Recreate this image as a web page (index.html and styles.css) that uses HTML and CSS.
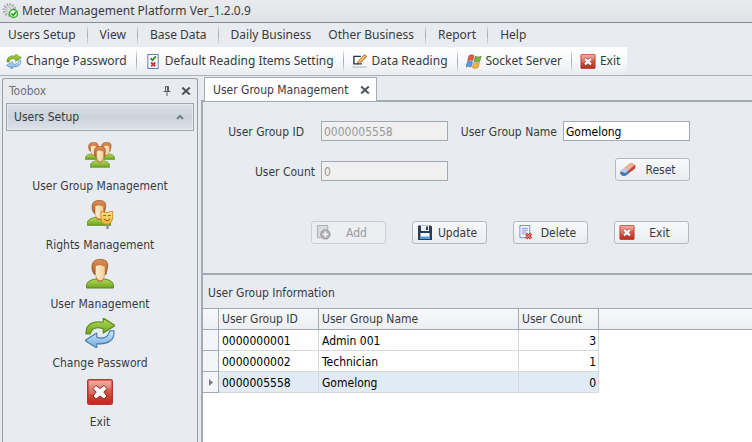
FILE: index.html
```html
<!DOCTYPE html>
<html lang="en">
<head>
<meta charset="utf-8">
<title>Meter Management Platform</title>
<link rel="stylesheet" href="styles.css">
</head>
<body>
<svg class="defs" aria-hidden="true">
  <defs>
    <linearGradient id="red" x1="0" y1="0" x2="0" y2="1"><stop offset="0" stop-color="#f0a294"/><stop offset=".45" stop-color="#d65a49"/><stop offset="1" stop-color="#b8281c"/></linearGradient>
    <linearGradient id="green" x1="0" y1="0" x2="0" y2="1"><stop offset="0" stop-color="#b8dc52"/><stop offset="1" stop-color="#6aa322"/></linearGradient>
    <linearGradient id="blue" x1="0" y1="0" x2="0" y2="1"><stop offset="0" stop-color="#cfe8fa"/><stop offset="1" stop-color="#6fa9dc"/></linearGradient>
    <linearGradient id="hair" x1="0" y1="0" x2="0" y2="1"><stop offset="0" stop-color="#dd9259"/><stop offset="1" stop-color="#a85a26"/></linearGradient>
    <linearGradient id="face" x1="0" y1="0" x2="1" y2="0"><stop offset="0" stop-color="#fff0d2"/><stop offset="1" stop-color="#f3cd98"/></linearGradient>
    <linearGradient id="mask" x1="0" y1="0" x2="0" y2="1"><stop offset="0" stop-color="#ffe88e"/><stop offset="1" stop-color="#efb52e"/></linearGradient>
    <symbol id="i-exit" viewBox="0 0 26 26">
      <rect x=".7" y=".7" width="24.6" height="24.6" rx="1.5" fill="url(#red)" stroke="#b4392c" stroke-width="1.4"/>
      <path d="M2 2h22v6Q12 16 2 15z" fill="#fff" opacity=".18"/>
      <path d="M9 6.500l4 3 4-3 3 3-3 3.700 3 3.800-3 3-4-3-4 3-3-3 3-3.800-3-3.700z" fill="#f6f6f8" stroke="#8f2a22" stroke-width="1" stroke-linejoin="round"/>
    </symbol>
    <symbol id="i-cycle" viewBox="0 0 28 28">
      <path d="M1 15C0 6 8 2 17 4V0l11 7-11 7v-4C11 8 6 9 5 15z" fill="url(#green)" stroke="#56851c" stroke-linejoin="round"/>
      <path d="M27 12c1 9-6 13-16 12v4L0 21l11-7v4c6 2 11 0 12-6z" fill="url(#blue)" stroke="#427bb2" stroke-linejoin="round"/>
    </symbol>
    <symbol id="i-person" viewBox="0 0 28 30">
      <path d="M.5 29C0 23 3 21.500 9 20h10c6 1.500 9 3 8.500 9z" fill="url(#green)" stroke="#5d8a22"/>
      <path d="M10 18h8q0 5-4 5t-4-5z" fill="#b9703a"/>
      <path d="M7.500 14C5.500 11 5.500 6 7 3.500 9 .5 12 .5 15 .5c6 0 8 4 6 10L20 15.500H8.500z" fill="url(#hair)" stroke="#9a5423" stroke-width=".8"/>
      <path d="M9.500 7q3-1.500 5-1 2 .8 4.500 1v8q-1 6.500-4.700 6.500T9.500 15z" fill="url(#face)" stroke="#c98850" stroke-width=".6"/>
    </symbol>
    <symbol id="i-group" viewBox="0 0 30 28">
      <svg x="0" y="0" width="17" height="18" viewBox="0 0 28 30" preserveAspectRatio="none"><use href="#i-person" width="28" height="30"/></svg>
      <svg x="13" y="0" width="17" height="18" viewBox="0 0 28 30" preserveAspectRatio="none"><use href="#i-person" width="28" height="30"/></svg>
      <svg x="5" y="4" width="20" height="22" viewBox="0 0 28 30" preserveAspectRatio="none"><use href="#i-person" width="28" height="30"/></svg>
    </symbol>
    <symbol id="i-rights" viewBox="0 0 28 32">
      <svg x="0" y="0" width="26" height="28"><use href="#i-person"/></svg>
      <path d="M22 22v9" stroke="#7f95aa" stroke-width="2.500"/>
      <path d="M15 12q6 3 12.500 0v6c0 5-3 8-6.500 8s-6-3-6-8z" fill="url(#mask)" stroke="#c98a1c"/>
      <path d="M17.500 17q1.500-1.500 3 0M22.500 17q1.500-1.500 3 0M18 20q3.500 4 7 0" fill="none" stroke="#9b5b12" stroke-width="1.200"/>
    </symbol>
    <symbol id="i-logo" viewBox="0 0 16 16">
      <circle cx="7.500" cy="7" r="5.300" fill="none" stroke="#a5a7a9" stroke-width="3" stroke-dasharray="1.500 1.200"/>
      <circle cx="7" cy="7" r="2.500" fill="#e2e2df" stroke="#aaa" stroke-width=".6"/>
      <circle cx="11.500" cy="10.500" r="4" fill="#eefae9" stroke="#35ad2f" stroke-width="1.500"/>
      <path d="M9.500 10.500l1.700 1.800 2.800-3.600" fill="none" stroke="#1f9d22" stroke-width="1.600"/>
    </symbol>
    <symbol id="i-list" viewBox="0 0 12 16">
      <rect x=".5" y=".5" width="11" height="15" fill="#f7f9ff" stroke="#5b74b8"/>
      <path d="M3.500 4.500l2 2 3.500-4" fill="none" stroke="#3f8a2a" stroke-width="2"/>
      <path d="M4 9l4.500 4M8.500 9L4 13" stroke="#c43a34" stroke-width="2"/>
    </symbol>
    <symbol id="i-write" viewBox="0 0 16 16">
      <path d="M0 13h15v2H0z" fill="#ccd0d3"/>
      <path d="M9 2.500H1.500v8H10" fill="#fff" stroke="#27344f" stroke-width="1.500"/>
      <path d="M5 11l1-3.500L12.500 1q2-.5 2.500 2L8.500 9.500z" fill="#e3a94f" stroke="#99631f" stroke-width=".8"/>
      <path d="M7 8l6-6" stroke="#ffe3a0"/><path d="M5 11l.5-2 1.500 1.400z" fill="#333"/>
    </symbol>
    <symbol id="i-flag" viewBox="0 0 16 14">
      <path d="M3 1q3-1.500 5 .2L6.700 6.200q-2.500-1.500-5 0z" fill="#dd5c43" stroke="#b53c29" stroke-width=".6"/>
      <path d="M9.200 1.800q3 1.500 6 0L13.700 7q-3 1.500-5.700 0z" fill="#7db343" stroke="#4f8428" stroke-width=".6"/>
      <path d="M1.500 7.200q2.500-1.200 5 .2L5 12.600q-2.500-1.500-5 0z" fill="#5b9ade" stroke="#2e6cb4" stroke-width=".6"/>
      <path d="M7.700 8.200q3 1.500 5.700 0L12 13.200q-3 1.300-5.700 0z" fill="#f0b545" stroke="#c07c1c" stroke-width=".6"/>
    </symbol>
    <symbol id="i-eraser" viewBox="0 0 16 14">
      <path d="M.5 9L10 .8q1-.6 2 0l2.800 1.700q.8.500.7 1.500l-.5 2L5.500 13.300H2.500L.5 11.500z" fill="#c9402f"/>
      <path d="M.5 9L10 .8q1-.6 2 0l2.800 1.700-9.500 8.300z" fill="#f3b19b"/>
      <path d="M.5 9l3.700-3.200 4.600 2L5.300 10.800z" fill="#a9d2f5"/>
      <path d="M.5 9l4.800 1.800L8.800 8v2.700l-3.300 2.600H2.500L.5 11.500z" fill="#3d7dc4"/>
      <path d="M5.300 10.800l9.500-8.300" stroke="#e06c58" stroke-width=".6"/>
    </symbol>
    <symbol id="i-save" viewBox="0 0 14 15">
      <path d="M0 .5h13l1 1V15H0z" fill="#2b3c55"/>
      <path d="M3 .5h8v5.500H3z" fill="#eef2f6"/><path d="M8 1.500h2v3.500H8z" fill="#2b3c55"/>
      <path d="M2.500 8h9v6h-9z" fill="#fff"/><path d="M2.500 11.500h9V14h-9z" fill="#4f9be0"/>
    </symbol>
    <symbol id="i-delete" viewBox="0 0 14 16">
      <path d="M.5.500h10.500v13H.5z" fill="#f5f8ff" stroke="#7688c2"/>
      <path d="M2.500 3.500h6.500M2.500 5.500h6.500M2.500 7.500h5M2.500 9.500h3" stroke="#7f93c8"/>
      <path d="M7 9l5.500 5.500M12.500 9L7 14.500" stroke="#b8322a" stroke-width="3"/>
      <path d="M7 9l5.500 5.500M12.500 9L7 14.500" stroke="#e8806f" stroke-width="1.200"/>
    </symbol>
    <symbol id="i-add" viewBox="0 0 15 16">
      <path d="M.5.500h11v13H.5z" fill="#d9dadb" stroke="#aaacae"/>
      <circle cx="9" cy="10" r="5" fill="#aeb0b2" stroke="#949698"/>
      <path d="M9 7v6M6 10h6" stroke="#f1f1f1" stroke-width="2"/>
    </symbol>
    <symbol id="i-close" viewBox="0 0 10 8"><path d="M1.200.500L8.800 7.500M8.800.500L1.200 7.500" stroke="#50555c" stroke-width="2"/></symbol>
    <symbol id="i-pin" viewBox="0 0 8 10"><path d="M2.500 5V.500h3V5M4.500.500V5M.5 5.500h7M4 6v4" fill="none" stroke="#5b6068"/></symbol>
    <symbol id="i-up" viewBox="0 0 8 6"><path d="M1 5l3-3 3 3" fill="none" stroke="#747b84" stroke-width="2"/></symbol>
  </defs>
</svg>
<div class="app">
  <header class="titlebar"><svg class="ic-logo"><use href="#i-logo"/></svg><span>Meter Management Platform Ver_1.2.0.9</span></header>
  <nav class="menu">
    <button>Users Setup</button><button class="sep">View</button><button class="sep">Base Data</button><button class="sep">Daily Business</button><button class="tight">Other Business</button><button class="sep">Report</button><button class="sep">Help</button>
  </nav>
  <div class="toolrow">
    <div class="toolbar">
      <button><svg class="ic"><use href="#i-cycle"/></svg>Change Password</button>
      <button class="sep"><svg class="ic"><use href="#i-list"/></svg>Default Reading Items Setting</button>
      <button class="sep"><svg class="ic"><use href="#i-write"/></svg>Data Reading</button>
      <button class="sep"><svg class="ic"><use href="#i-flag"/></svg>Socket Server</button>
      <button class="sep"><svg class="ic"><use href="#i-exit"/></svg>Exit</button>
    </div>
  </div>
  <div class="work">
    <aside class="toolbox">
      <div class="toolbox-head"><span>Toobox</span><button class="plain" aria-label="Pin"><svg class="ic-pin"><use href="#i-pin"/></svg></button><button class="plain" aria-label="Close"><svg class="ic-close"><use href="#i-close"/></svg></button></div>
      <button class="group-head"><span>Users Setup</span><svg class="ic-up"><use href="#i-up"/></svg></button>
      <div class="items">
        <button><svg class="ic-big"><use href="#i-group"/></svg>User Group Management</button>
        <button><svg class="ic-big"><use href="#i-rights"/></svg>Rights Management</button>
        <button><svg class="ic-big"><use href="#i-person"/></svg>User Management</button>
        <button><svg class="ic-big"><use href="#i-cycle"/></svg>Change Password</button>
        <button><svg class="ic-big" viewBox="-2 -2 30 30"><use href="#i-exit" width="26" height="26"/></svg>Exit</button>
      </div>
    </aside>
    <main class="main">
      <div class="tabs"><div class="tab"><span>User Group Management</span><button class="plain" aria-label="Close tab"><svg class="ic-close"><use href="#i-close"/></svg></button></div></div>
      <div class="panel">
        <form class="form">
          <div class="fields">
            <label class="wide" for="gid">User Group ID</label><input id="gid" value="0000005558" disabled>
            <label for="gname">User Group Name</label><input id="gname" value="Gomelong">
            <label for="cnt">User Count</label><input id="cnt" value="0" disabled>
            <span></span><button class="btn reset" type="button"><svg class="ic"><use href="#i-eraser"/></svg><span>Reset</span></button>
          </div>
          <div class="actions">
            <button class="btn" type="button" disabled><svg class="ic"><use href="#i-add"/></svg><span>Add</span></button>
            <button class="btn" type="button"><svg class="ic"><use href="#i-save"/></svg><span>Update</span></button>
            <button class="btn" type="button"><svg class="ic"><use href="#i-delete"/></svg><span>Delete</span></button>
            <button class="btn" type="button"><svg class="ic"><use href="#i-exit"/></svg><span>Exit</span></button>
          </div>
        </form>
        <section class="info">
          <h2>User Group Information</h2>
          <div class="grid">
            <table>
              <colgroup><col class="c-mark"><col class="c-id"><col class="c-name"><col class="c-count"><col></colgroup>
              <thead><tr><th></th><th>User Group ID</th><th>User Group Name</th><th>User Count</th><th class="rest"></th></tr></thead>
              <tbody>
                <tr><td class="mark"></td><td>0000000001</td><td>Admin 001</td><td class="num">3</td><td class="rest"></td></tr>
                <tr><td class="mark"></td><td>0000000002</td><td>Technician</td><td class="num">1</td><td class="rest"></td></tr>
                <tr class="current"><td class="mark"><svg class="ic-mark" viewBox="0 0 4 7"><path d="M0 0l4 3.500L0 7z" fill="#777d86"/></svg></td><td>0000005558</td><td>Gomelong</td><td class="num">0</td><td class="rest"></td></tr>
              </tbody>
            </table>
          </div>
        </section>
      </div>
    </main>
  </div>
</div>
</body>
</html>
```
FILE: styles.css
```css
* { box-sizing: border-box; }
body {
  margin: 0;
  background: #e8ebf0;
  color: #383b40;
  font: 12px/16px "DejaVu Sans Condensed", "Open Sans", sans-serif;
}
button { font: inherit; color: inherit; background: none; border: 0; margin: 0; padding: 0; }
svg { display: block; flex: none; }
.defs { position: absolute; width: 0; height: 0; }
.app { display: flex; flex-direction: column; min-height: 100vh; }

.titlebar {
  display: flex;
  align-items: center;
  gap: 4px;
  height: 23px;
  padding-left: 2px;
  background: linear-gradient(#e9ebee, #dfe2e6);
  border-bottom: 1px solid #868b93;
}
.ic-logo { width: 16px; height: 16px; }

.titlebar, .menu, .toolbar { font-family: "Noto Sans", "Open Sans", sans-serif; }
.menu { display: flex; align-items: center; height: 24px; }
.menu button { height: 18px; padding: 0 11px 0 12px; white-space: nowrap; }
.menu button:first-child { padding-left: 8px; }
.menu .tight { padding-left: 6px; }
.menu .sep, .toolbar .sep { border-style: solid; border-width: 0 0 0 1px; border-image: linear-gradient(#e3e6ea, #a3a8af, #e3e6ea) 1; }

.toolrow { border-bottom: 1px solid #aab0b8; }
.toolbar {
  display: flex;
  align-items: center;
  width: fit-content;
  height: 28px;
  background: linear-gradient(#fff, #f8f9fb 50%, #e9ecf0);
}
.toolbar button {
  display: flex;
  align-items: center;
  gap: 4px;
  height: 20px;
  padding: 0 9px 0 8px;
  white-space: nowrap;
}
.toolbar button:first-child { padding-left: 6px; }
.toolbar button:last-child { padding-right: 7px; }
.ic { width: 16px; height: 15px; }

.work { display: flex; flex: 1; gap: 3px; padding: 1px 0 0 2px; }
.toolbox {
  flex: 0 0 196px;
  margin-top: 1px;
  padding: 0 3px;
  border: 1px solid #979ea8;
  border-bottom: 0;
  border-radius: 3px 3px 0 0;
}
.toolbox-head { display: flex; align-items: center; height: 24px; padding: 0 3px; gap: 10px; color: #6d727b; }
.toolbox-head span { flex: 1; }
.ic-pin { width: 8px; height: 10px; }
.ic-close { width: 10px; height: 8px; }
.ic-up { width: 8px; height: 6px; }
.group-head {
  display: flex;
  align-items: center;
  justify-content: space-between;
  width: 100%;
  height: 28px;
  padding: 0 9px 0 7px;
  border: 1px solid #9ea6b0;
  box-shadow: inset 0 0 0 1px #e6e9ed;
  background: linear-gradient(#dbe0e6, #ccd3dc 50%, #dde2e8);
}
.items { display: flex; flex-direction: column; padding-top: 10px; }
.items button { display: flex; flex-direction: column; align-items: center; gap: 7px; height: 59px; }
.ic-big { width: 30px; height: 30px; }

.main { flex: 1; min-width: 0; display: flex; flex-direction: column; }
.tabs { display: flex; padding-left: 3px; border-bottom: 1px solid #a3aab4; }
.tab {
  display: flex;
  align-items: center;
  gap: 12px;
  height: 24px;
  margin-bottom: -1px;
  padding: 0 6px 0 8px;
  background: #fff;
  border: 1px solid #a3aab4;
  border-bottom: 0;
}
.panel { flex: 1; display: flex; flex-direction: column; border-left: 2px solid #a3aab4; border-top: 1px solid #a3aab4; }
.form { padding: 19px 0 29px; border-bottom: 2px solid #a3aab4; }
.fields {
  display: grid;
  grid-template-columns: 118px 127px 115px 127px;
  grid-auto-rows: 20px;
  row-gap: 20px;
}
.fields label { justify-self: end; padding: 3px 6px 0 0; white-space: nowrap; }
.fields .wide { padding-right: 17px; }
.fields input {
  width: 100%;
  min-width: 0;
  height: 20px;
  padding: 1px 2px 0;
  border: 1px solid #a3aab4;
  border-radius: 0;
  background: #fff;
  color: #000;
  font: inherit;
}
.fields input:disabled { background: #f0f0f0; color: #999; }
.btn {
  display: flex;
  align-items: center;
  width: 75px;
  height: 23px;
  padding: 0 4px;
  border: 1px solid #b5bac1;
  border-radius: 3px;
  background: linear-gradient(#f8f9fb, #e9ecf0);
}
.btn span { flex: 1; text-align: center; }
.btn:disabled { color: #9a9da1; border-color: #ccd0d5; background: #eceef1; }
.reset { justify-self: end; align-self: end; }
.actions { display: flex; gap: 26px; padding: 40px 0 0 108px; }

.info { flex: 1; display: flex; flex-direction: column; }
.info h2 { margin: 0; padding: 10px 5px 7px; font-size: 12px; font-weight: 400; }
.grid { flex: 1; background: #fff; }
table { width: 100%; table-layout: fixed; border-collapse: separate; border-spacing: 0; border-top: 1px solid #a3aab4; }
.c-mark { width: 16px; }
.c-id { width: 100px; }
.c-name { width: 200px; }
.c-count { width: 80px; }
th, td { height: 21px; padding: 0 3px; text-align: left; font-weight: 400; border-right: 1px solid #d5d8dc; border-bottom: 1px solid #d5d8dc; }
th { background: linear-gradient(#f7f8fa, #eceff3); border-color: #a3aab4; }
td { padding-top: 2px; color: #000; }
.num { text-align: right; padding-right: 2px; }
.mark { padding: 0 0 0 6px; background: #f3f5f8; border-color: #a3aab4; }
.current td { background: #e1ebf5; }
.current .mark { background: #f3f5f8; }
.ic-mark { width: 4px; height: 7px; }
.rest, .current .rest { border-right: 0; }
td.rest, .current td.rest { background: #fff; border-bottom: 0; }
```
